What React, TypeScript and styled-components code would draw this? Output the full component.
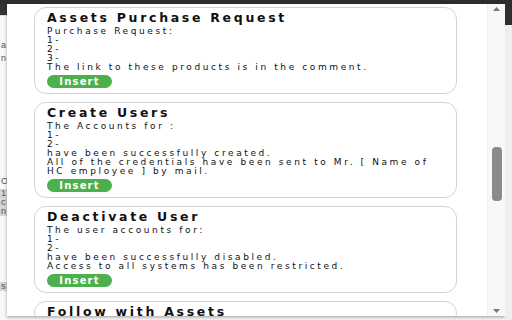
import React from 'react'
import styled, { createGlobalStyle } from 'styled-components'

const GlobalStyle = createGlobalStyle`
  html, body {
    margin: 0;
    padding: 0;
    background: #f2f2f2;
  }
  * {
    box-sizing: border-box;
  }
`

const Screen = styled.div`
  width: 512px;
  height: 320px;
  display: flex;
  flex-direction: column;
  overflow: hidden;
  background: #f2f2f2;
`

const TopBar = styled.div`
  height: 4px;
  flex-shrink: 0;
  background: #2e2e2e;
`

const Body = styled.div`
  flex: 1;
  display: flex;
  min-height: 0;
`

const PageStrip = styled.div`
  width: 7px;
  flex-shrink: 0;
  display: flex;
  flex-direction: column;
  background: #f7f7f7;
  font-family: 'Liberation Sans', sans-serif;
  font-size: 9px;
  color: #555;
  overflow: hidden;
`

const PageHeader = styled.div`
  height: 12px;
  background: #333;
  border-bottom: 1px solid #ddd;
`

const PageBit = styled.div<{ $top: number; $shade?: boolean }>`
  margin-top: ${props => props.$top}px;
  height: 9px;
  line-height: 9px;
  padding-left: 1px;
  background: ${props => (props.$shade ? '#d6d6d6' : 'transparent')};
  white-space: nowrap;
`

const RightStrip = styled.div`
  width: 7px;
  flex-shrink: 0;
  display: flex;
  flex-direction: column;
  background: #eeeeee;
`

const RightHeader = styled.div`
  height: 21px;
  background: #2e2e2e;
`

const Center = styled.div`
  flex: 1;
  display: flex;
  flex-direction: column;
  min-width: 0;
`

const Popup = styled.div`
  height: 312px;
  display: flex;
  background: #fff;
  box-shadow: 0 1px 3px rgba(0, 0, 0, 0.35);
`

const Content = styled.div`
  flex: 1;
  display: flex;
  flex-direction: column;
  gap: 8px;
  padding: 3px 30px 0 27px;
  overflow: hidden;
`

const Card = styled.div`
  flex-shrink: 0;
  border: 1px solid #d2d2d2;
  border-radius: 12px;
  padding: 3px 12px 5px 12px;
  font-family: 'Comic Sans MS', 'DejaVu Sans', sans-serif;
  color: #111;
`

const Title = styled.div`
  font-size: 12.5px;
  font-weight: 700;
  line-height: 14px;
  letter-spacing: 2.7px;
  white-space: nowrap;
`

const Text = styled.div`
  margin-top: 2px;
  font-size: 9px;
  line-height: 9px;
  letter-spacing: 2.6px;
  white-space: pre;
`

const InsertButton = styled.button`
  display: block;
  margin-top: 3px;
  width: 65px;
  height: 13px;
  padding: 0;
  border: none;
  border-radius: 7px;
  background: #4cb04d;
  color: #fff;
  font-family: 'DejaVu Sans', sans-serif;
  font-size: 10px;
  font-weight: 700;
  line-height: 13px;
  letter-spacing: 1.2px;
  text-align: center;
`

const Scrollbar = styled.div`
  width: 18px;
  flex-shrink: 0;
  display: flex;
  flex-direction: column;
  align-items: center;
  background: #f8f8f8;
  border-left: 1px solid #f0f0f0;
`

const Arrow = styled.div`
  height: 10px;
  display: flex;
  align-items: center;
  justify-content: center;
`

const Track = styled.div`
  flex: 1;
  width: 100%;
  display: flex;
  justify-content: center;
`

const Thumb = styled.div`
  margin-top: 133px;
  width: 10px;
  height: 54px;
  border-radius: 4px;
  background: #8a8a8a;
`

const cards = [
  {
    title: 'Assets Purchase Request',
    text: 'Purchase Request:\n1-\n2-\n3-\nThe link to these products is in the comment.',
  },
  {
    title: 'Create Users',
    text:
      'The Accounts for :\n1-\n2-\nhave been successfully created.\nAll of the credentials have been sent to Mr. [ Name of\nHC employee ] by mail.',
  },
  {
    title: 'Deactivate User',
    text:
      'The user accounts for:\n1-\n2-\nhave been successfully disabled.\nAccess to all systems has been restricted.',
  },
  {
    title: 'Follow with Assets',
    text: '',
  },
]

function App() {
  return (
    <Screen>
      <GlobalStyle />
      <TopBar />
      <Body>
        <PageStrip>
          <PageHeader />
          <PageBit $top={25}>a</PageBit>
          <PageBit $top={4}>n</PageBit>
          <PageBit $top={114}>O</PageBit>
          <PageBit $top={3} $shade>
            1
          </PageBit>
          <PageBit $top={0} $shade>
            c
          </PageBit>
          <PageBit $top={0} $shade>
            n
          </PageBit>
          <PageBit $top={66} $shade>
            s
          </PageBit>
        </PageStrip>
        <Center>
          <Popup>
            <Content>
              {cards.map(card => (
                <Card key={card.title}>
                  <Title>{card.title}</Title>
                  {card.text && <Text>{card.text}</Text>}
                  {card.text && <InsertButton>Insert</InsertButton>}
                </Card>
              ))}
            </Content>
            <Scrollbar>
              <Arrow>
                <svg width="7" height="4" viewBox="0 0 7 4">
                  <path d="M0 4 L3.5 0 L7 4 Z" fill="#777" />
                </svg>
              </Arrow>
              <Track>
                <Thumb />
              </Track>
              <Arrow>
                <svg width="7" height="4" viewBox="0 0 7 4">
                  <path d="M0 0 L3.5 4 L7 0 Z" fill="#777" />
                </svg>
              </Arrow>
            </Scrollbar>
          </Popup>
        </Center>
        <RightStrip>
          <RightHeader />
        </RightStrip>
      </Body>
    </Screen>
  )
}

export default App
